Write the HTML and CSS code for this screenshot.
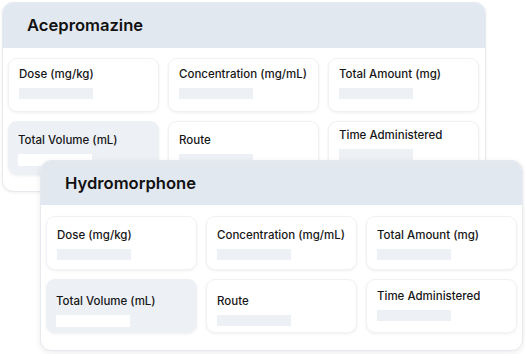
FILE: index.html
```html
<!DOCTYPE html>
<html lang="en">
<head>
  <meta charset="UTF-8" />
  <meta name="viewport" content="width=device-width, initial-scale=1.0" />
  <title>Drug Cards</title>
  <link rel="stylesheet" href="styles.css">
</head>
<body>
  <div class="stack">
    <div class="drug-card">
      <div class="drug-header">Acepromazine</div>
      <div class="field-grid">
        <div class="field">
          <div class="field-label">Dose (mg/kg)</div>
          <div class="field-bar"></div>
        </div>
        <div class="field">
          <div class="field-label">Concentration (mg/mL)</div>
          <div class="field-bar"></div>
        </div>
        <div class="field">
          <div class="field-label">Total Amount (mg)</div>
          <div class="field-bar"></div>
        </div>
        <div class="field field-low field-active">
          <div class="field-label">Total Volume (mL)</div>
          <div class="field-bar"></div>
        </div>
        <div class="field field-low">
          <div class="field-label">Route</div>
          <div class="field-bar"></div>
        </div>
        <div class="field field-high">
          <div class="field-label">Time Administered</div>
          <div class="field-bar"></div>
        </div>
      </div>
    </div>

    <div class="drug-card drug-card-front">
      <div class="drug-header">Hydromorphone</div>
      <div class="field-grid">
        <div class="field">
          <div class="field-label">Dose (mg/kg)</div>
          <div class="field-bar"></div>
        </div>
        <div class="field">
          <div class="field-label">Concentration (mg/mL)</div>
          <div class="field-bar"></div>
        </div>
        <div class="field">
          <div class="field-label">Total Amount (mg)</div>
          <div class="field-bar"></div>
        </div>
        <div class="field field-low field-active">
          <div class="field-label">Total Volume (mL)</div>
          <div class="field-bar"></div>
        </div>
        <div class="field field-low">
          <div class="field-label">Route</div>
          <div class="field-bar"></div>
        </div>
        <div class="field field-high">
          <div class="field-label">Time Administered</div>
          <div class="field-bar"></div>
        </div>
      </div>
    </div>
  </div>
</body>
</html>
```

FILE: styles.css
```css
body {
  margin: 0;
  background: #ffffff;
  font-family: Inter, "Noto Sans", sans-serif;
  color: #111;
}

.stack {
  position: relative;
  padding: 2px;
  height: 350px;
}

.drug-card {
  width: 484px;
  box-sizing: border-box;
  background: #fff;
  border: 1px solid #e6e9ee;
  border-radius: 11px;
  overflow: hidden;
  box-shadow: 0 1px 3px rgba(15, 23, 42, 0.06);
}

.drug-card-front {
  position: absolute;
  left: 40px;
  top: 160px;
  width: 483px;
  box-shadow: 0 2px 6px rgba(15, 23, 42, 0.08);
}

.drug-header {
  height: 45px;
  background: #e2e8f0;
  padding-left: 24px;
  font-size: 16.6px;
  font-weight: 600;
  line-height: 45px;
  color: #111;
}

.drug-card-front .drug-header {
  height: 44px;
  line-height: 44px;
}

.field-grid {
  display: grid;
  grid-template-columns: repeat(3, 151px);
  grid-auto-rows: 54px;
  gap: 9px;
  padding: 10px 7px 16px 5px;
}

.drug-card-front .field-grid {
  padding-top: 11px;
  padding-bottom: 17px;
}

.field {
  box-sizing: border-box;
  background: #fff;
  border: 1px solid #f0f2f5;
  border-radius: 9px;
  padding: 8px 10px 0;
  box-shadow: 0 1px 3px rgba(15, 23, 42, 0.07);
}

.field-low {
  padding-top: 11px;
}

.field-high {
  padding-top: 6px;
}

.drug-card-front .field {
  padding-top: 11px;
}

.drug-card-front .field-low {
  padding-top: 14px;
}

.drug-card-front .field-high {
  padding-top: 9px;
}

.field-active {
  background: #edf1f6;
  border-color: #edf1f6;
  padding-left: 9px;
}

.field-label {
  font-size: 11.5px;
  font-weight: 500;
  line-height: 14px;
  color: #161616;
}

.field-bar {
  width: 74px;
  height: 11px;
  margin-top: 7px;
  background: #edf1f6;
}

.field-active .field-bar {
  background: #fff;
  height: 12px;
}
```
